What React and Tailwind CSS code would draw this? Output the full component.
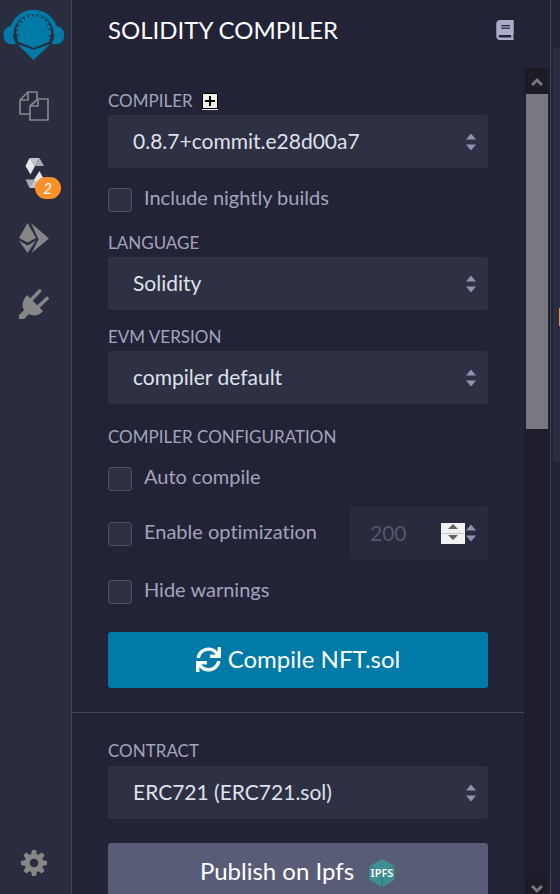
import { FaBook, FaSync } from "react-icons/fa";

function RemixLogo() {
  return (
    <svg viewBox="0 0 186 160" className="h-[53px] w-[62px]" aria-hidden="true">
      <path d="M25 82a67 67 0 0 1 134 0" fill="none" stroke="#007aa6" strokeWidth="13" />
      <path d="M29 58C10 58 1 68 1 84c0 16 7 26 20 28 8 1 15 0 18-2C29 95 27 78 33 58zM156 58c19 0 28 10 28 26 0 16-7 26-20 28-8 1-15 0-18-2 10-15 12-32 6-52z" fill="#007aa6" />
      <circle cx="92" cy="74" r="45" fill="#007aa6" />
      <circle cx="92" cy="74" r="48" fill="none" stroke="#007aa6" strokeWidth="9" strokeDasharray="11 3" />
      <path d="M42 102l50 22 50-22v12l-50 40-50-40z" fill="#2a2c3f" />
      <path d="M42 88h100l-3 17-47 17-47-17z" fill="#007aa6" />
      <path d="M42 112l50 17 50-17-50 48z" fill="#007aa6" />
    </svg>
  );
}

function FilesIcon() {
  return (
    <svg viewBox="0 0 30 30" className="size-[30px]" fill="none" stroke="#868686" strokeWidth="1.7" strokeLinejoin="round" aria-hidden="true">
      <path d="M11 23H1V9l8-8h9v7M1 9h8V1" />
      <path d="M11 15l8-7h10v21H11zM11 15h8V8" />
    </svg>
  );
}

function SolidityIcon() {
  return (
    <svg viewBox="0 0 30 33" className="h-[33px] w-[30px]" aria-hidden="true">
      <path d="M10.500 1h10l-4.500 8z" fill="#c4c5c9" />
      <path d="M20.500 1L25 9h-9z" fill="#a9aab0" />
      <path d="M6.500 9l4-8L16 9l-4.500 8.500z" fill="#e6e7ea" />
      <path d="M20.500 31h-10l4.500-8.500z" fill="#c4c5c9" />
      <path d="M10.500 31l-4-8.500H15z" fill="#a9aab0" />
      <path d="M25 22.500L20.500 31 15 22.500l5.500-8.500z" fill="#e6e7ea" />
    </svg>
  );
}

function DeployIcon() {
  return (
    <svg viewBox="0 0 30 30" className="size-[30px]" fill="#868686" aria-hidden="true">
      <path d="M8.500 0l8.500 15-8.500 4.500L0 15z" />
      <path d="M0 17.500l8.500 5 8.500-5-8.500 12.500z" />
      <path d="M12 0l18 15.500L12.500 30l7-13.500z" />
    </svg>
  );
}

function PlugIcon() {
  return (
    <svg viewBox="0 0 30 30" className="size-[30px]" aria-hidden="true">
      <path d="M8 6l16 16c-4 5-10 5.500-14 3l-5 5H0v-4l5-5C2 17 4 10 8 6z" fill="#868686" />
      <path d="M13 10l7.500-8M20 17l8-7.500" stroke="#868686" strokeWidth="3.600" strokeLinecap="round" />
    </svg>
  );
}

const teeth = [0, 45, 90, 135, 180, 225, 270, 315];

function GearIcon() {
  return (
    <svg viewBox="-13 -13 26 26" className="size-[26px]" fill="#868686" aria-hidden="true">
      {teeth.map((a) => (
        <path key={a} d="M-3 -8l1-5h4l1 5z" transform={`rotate(${a})`} />
      ))}
      <circle r="6.800" fill="none" stroke="#868686" strokeWidth="5" />
    </svg>
  );
}

function IpfsIcon() {
  return (
    <svg viewBox="0 0 28 28" className="size-7" role="img" aria-label="IPFS">
      <path d="M14 0l12.500 7v14L14 28 1.500 21V7z" fill="#3e8f90" />
      <path d="M14 14L1.500 7M14 14l12.500-7M14 14v14" stroke="#2d6f75" strokeWidth="1" />
      <text x="14" y="18" textAnchor="middle" fontSize="11" fontWeight="600" fill="#fff" fontFamily="Noto Sans, sans-serif">IPFS</text>
    </svg>
  );
}

function Arrows() {
  return (
    <svg viewBox="0 0 10 17" className="pointer-events-none absolute top-1/2 right-3 h-[17px] w-[10px] -translate-y-1/2" fill="#8f93b3" aria-hidden="true">
      <path d="M5 0l5 6H0zM5 17l5-6H0z" />
    </svg>
  );
}

function SelectBox({ id, value }) {
  return (
    <div className="relative">
      <select id={id} className="block h-[53px] w-full appearance-none rounded-[3px] bg-[#2e3044] px-[25px] pb-px text-[21px] text-[#dfe1ea]">
        <option>{value}</option>
      </select>
      <Arrows />
    </div>
  );
}

function Check({ id, children }) {
  return (
    <div className="flex h-[26px] items-end gap-3">
      <input id={id} type="checkbox" className="size-6 shrink-0 appearance-none rounded-[3px] border border-[#4c4e66] bg-[#2e3044]" />
      <label htmlFor={id} className="pb-[3px] text-[20px] leading-6 whitespace-nowrap">{children}</label>
    </div>
  );
}

const label = "block text-[17px] leading-6";

export default function App() {
  return (
    <div className="flex h-screen overflow-hidden bg-[#222336] font-[Lato,sans-serif] text-[#a2a3bd] [font-variant-ligatures:none]">
      <nav className="flex w-[72px] shrink-0 flex-col items-center border-r border-[#42445a] bg-[#2a2c3f] pt-[7px] pr-1 pb-[18px]">
        <button aria-label="Home"><RemixLogo /></button>
        <div className="mt-[31px] flex flex-col gap-9">
          <button aria-label="File explorers"><FilesIcon /></button>
          <button aria-label="Solidity compiler" className="relative h-[30px]">
            <SolidityIcon />
            <span className="absolute top-5 left-4 flex h-[22px] w-[26px] items-center justify-center rounded-full bg-[#fd8f2b] text-[15px] text-white italic">2</span>
          </button>
          <button aria-label="Deploy and run"><DeployIcon /></button>
          <button aria-label="Plugin manager"><PlugIcon /></button>
        </div>
        <button aria-label="Settings" className="mt-auto"><GearIcon /></button>
      </nav>

      <main className="flex min-w-0 flex-1 flex-col border-r border-[#42445a]">
        <header className="flex h-[68px] shrink-0 items-center justify-between pr-[35px] pb-2 pl-9">
          <h1 className="text-[24px] leading-8 text-white">SOLIDITY COMPILER</h1>
          <button aria-label="Documentation"><FaBook className="size-5 text-[#a9abc8]" /></button>
        </header>
        <div className="flex min-h-0 flex-1">
          <div className="min-w-0 flex-1 overflow-hidden pt-[21px]">
            <section className="px-9">
              <div className="mb-0.5 flex items-center gap-[9px]">
                <label htmlFor="compiler" className={label}>COMPILER</label>
                <button aria-label="Add compiler" className="flex size-4 items-center justify-center border border-black bg-[#eef0e8] shadow-[0_1px_0_#eee]">
                  <svg viewBox="0 0 10 10" className="size-[10px]" stroke="#000" strokeWidth="2" aria-hidden="true"><path d="M5 0v10M0 5h10" /></svg>
                </button>
              </div>
              <SelectBox id="compiler" value="0.8.7+commit.e28d00a7" />
              <div className="mt-[18px]"><Check id="nightly">Include nightly builds</Check></div>
              <label htmlFor="language" className={`${label} mt-[19px] mb-0.5`}>LANGUAGE</label>
              <SelectBox id="language" value="Solidity" />
              <label htmlFor="evm" className={`${label} mt-[15px] mb-0.5`}>EVM VERSION</label>
              <SelectBox id="evm" value="compiler default" />
              <h2 className={`${label} mt-[21px] mb-4`}>COMPILER CONFIGURATION</h2>
              <Check id="auto">Auto compile</Check>
              <div className="mt-[15px] flex items-center justify-between">
                <Check id="optimize">Enable optimization</Check>
                <div className="relative w-[138px]">
                  <input type="number" aria-label="Optimization runs" defaultValue={200} disabled className="block h-[54px] w-full [appearance:textfield] rounded-[3px] bg-[#282a3e] pb-px pl-5 text-[21px] text-[#55576d] [&::-webkit-inner-spin-button]:appearance-none" />
                  <svg viewBox="0 0 24 21" className="pointer-events-none absolute top-[17px] right-[23px] h-[21px] w-6" aria-hidden="true">
                    <path d="M0 0h24v21H0z" fill="#f1f1f1" />
                    <path d="M1 10.500h22" stroke="#c8c8c8" />
                    <path d="M12 1l5 5H7zM12 17l5-5H7z" fill="#606060" />
                  </svg>
                  <Arrows />
                </div>
              </div>
              <div className="mt-[18px]"><Check id="hide">Hide warnings</Check></div>
              <button className="mt-7 flex h-14 w-full items-center justify-center gap-[7px] rounded-[3px] bg-[#007aa6] pb-0.5 text-[24px] text-white">
                <FaSync className="size-[25px]" />
                Compile NFT.sol
              </button>
            </section>
            <hr className="mt-6 border-[#42445a]" />
            <section className="px-9 pt-[26px]">
              <label htmlFor="contract" className={`${label} mb-[3px]`}>CONTRACT</label>
              <SelectBox id="contract" value="ERC721 (ERC721.sol)" />
              <button className="mt-6 flex h-14 w-full items-start justify-center gap-[14px] rounded-[3px] bg-[#595c76] pt-3 text-[24px] leading-8 text-white">
                Publish on Ipfs
                <span className="pt-1"><IpfsIcon /></span>
              </button>
            </section>
          </div>
          <div className="flex w-[26px] shrink-0 flex-col bg-[#1f1e2c] px-0.5" aria-hidden="true">
            <div className="flex h-[26px] items-center justify-center bg-[#1c1b26]">
              <svg viewBox="0 0 12 9" className="h-[9px] w-3" fill="none" stroke="#77777f" strokeWidth="3"><path d="M1 8l5-5 5 5" /></svg>
            </div>
            <div className="h-[335px] bg-[#787880]" />
            <div className="mt-auto flex h-4 items-end justify-center bg-[#1c1b26]">
              <svg viewBox="0 0 12 9" className="h-[9px] w-3" fill="none" stroke="#77777f" strokeWidth="3"><path d="M1 1l5 5 5-5" /></svg>
            </div>
          </div>
        </div>
      </main>

      <aside className="w-[9px] shrink-0 pt-12 pl-0.5">
        <div className="flex h-[414px] flex-col items-end bg-[#2a2c3f] pt-[260px]">
          <div className="h-[18px] w-px bg-[#e8923a]" />
        </div>
      </aside>
    </div>
  );
}
